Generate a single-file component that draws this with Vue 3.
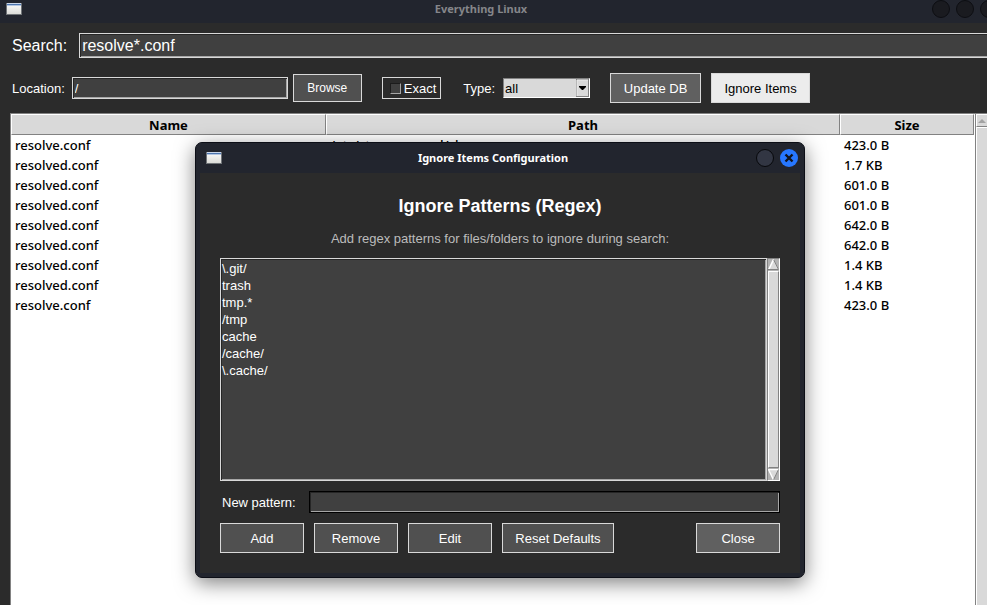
<script setup>
import { ref } from 'vue'

const search = ref('resolve*.conf')
const location = ref('/')
const exact = ref(false)
const type = ref('all')
const newPattern = ref('')
const selected = ref([])

const results = ref([
  { name: 'resolve.conf', path: '/etc/strongswan.d/charon', size: '423.0 B' },
  { name: 'resolved.conf', path: '', size: '1.7 KB' },
  { name: 'resolved.conf', path: '', size: '601.0 B' },
  { name: 'resolved.conf', path: '', size: '601.0 B' },
  { name: 'resolved.conf', path: '', size: '642.0 B' },
  { name: 'resolved.conf', path: '', size: '642.0 B' },
  { name: 'resolved.conf', path: '', size: '1.4 KB' },
  { name: 'resolved.conf', path: '', size: '1.4 KB' },
  { name: 'resolve.conf', path: '', size: '423.0 B' },
])

const patterns = ref(['\\.git/', 'trash', 'tmp.*', '/tmp', 'cache', '/cache/', '\\.cache/'])

function addPattern() {
  const value = newPattern.value.trim()
  if (value) patterns.value.push(value)
  newPattern.value = ''
}

function removePatterns() {
  patterns.value = patterns.value.filter((p) => !selected.value.includes(p))
}
</script>

<template>
  <div class="app">
    <header class="titlebar main-title">
      <svg class="win-icon" width="16" height="12" viewBox="0 0 16 12" aria-hidden="true">
        <defs>
          <linearGradient id="paper" x1="0" y1="0" x2="0" y2="1">
            <stop offset="0" stop-color="#ffffff" />
            <stop offset="1" stop-color="#dcdcd8" />
          </linearGradient>
        </defs>
        <rect x="0" y="0" width="16" height="12" fill="#6f7377" />
        <rect x="1" y="0" width="14" height="11" fill="url(#paper)" />
        <rect x="1" y="0" width="14" height="1" fill="#c9d6ea" />
        <rect x="1" y="1" width="14" height="1" fill="#4d76b0" />
        <rect x="1" y="2" width="14" height="1" fill="#b4c6e2" />
      </svg>
      <h1 class="caption dim">Everything Linux</h1>
      <div class="win-buttons">
        <button class="round off" type="button" aria-label="Minimize"></button>
        <button class="round off" type="button" aria-label="Maximize"></button>
        <button class="round off" type="button" aria-label="Close window"></button>
      </div>
    </header>

    <div class="search-row">
      <label class="big" for="search">Search:</label>
      <input id="search" v-model="search" class="entry search" type="text" />
    </div>

    <div class="controls">
      <label class="lbl" for="location">Location:</label>
      <input id="location" v-model="location" class="entry location" type="text" />
      <button class="btn browse" type="button">Browse</button>
      <label class="exact"><input v-model="exact" type="checkbox" /><span class="lbl">Exact</span></label>
      <label class="lbl" for="type">Type:</label>
      <div class="combo">
        <select id="type" v-model="type">
          <option>all</option>
          <option>file</option>
          <option>folder</option>
        </select>
        <svg class="combo-arrow" width="13" height="18" viewBox="0 0 13 18" aria-hidden="true">
          <rect width="13" height="18" fill="#808080" />
          <rect x="1" y="1" width="11" height="16" fill="#d9d9d9" />
          <path d="M1 17V1H12" fill="none" stroke="#eeeeee" />
          <path d="M3 7H10V8L7 11H6L3 8Z" fill="#000" />
        </svg>
      </div>
      <button class="btn strong update" type="button">Update DB</button>
      <button class="btn active" type="button">Ignore Items</button>
    </div>

    <main class="results">
      <div class="table-box">
        <table>
          <colgroup>
            <col class="col-name" />
            <col />
            <col class="col-size" />
          </colgroup>
          <thead>
            <tr><th>Name</th><th>Path</th><th>Size</th></tr>
          </thead>
          <tbody>
            <tr v-for="(row, i) in results" :key="i">
              <td>{{ row.name }}</td>
              <td>{{ row.path }}</td>
              <td>{{ row.size }}</td>
            </tr>
          </tbody>
        </table>
      </div>
      <div class="side-scroll">
        <div class="side-up">
          <svg width="8" height="4" viewBox="0 0 8 4" aria-hidden="true"><path d="M4 0L8 4H0Z" fill="#a3a3a3" /></svg>
        </div>
        <div class="side-thumb"></div>
      </div>
    </main>

    <section class="dialog" role="dialog" aria-labelledby="dialog-title">
      <header class="titlebar dialog-bar">
        <svg class="win-icon" width="16" height="12" viewBox="0 0 16 12" aria-hidden="true">
          <rect x="0" y="0" width="16" height="12" fill="#6f7377" />
          <rect x="1" y="0" width="14" height="11" fill="url(#paper)" />
          <rect x="1" y="0" width="14" height="1" fill="#c9d6ea" />
          <rect x="1" y="1" width="14" height="1" fill="#4d76b0" />
          <rect x="1" y="2" width="14" height="1" fill="#b4c6e2" />
        </svg>
        <h2 id="dialog-title" class="caption">Ignore Items Configuration</h2>
        <div class="win-buttons">
          <button class="round" type="button" aria-label="Minimize dialog"></button>
          <button class="round close" type="button" aria-label="Close dialog">
            <svg width="18" height="18" viewBox="0 0 18 18" aria-hidden="true">
              <path d="M5.5 5.5L12.5 12.5M12.5 5.5L5.5 12.5" stroke="#10131c" stroke-width="2.4" />
            </svg>
          </button>
        </div>
      </header>

      <div class="dialog-body">
        <h3>Ignore Patterns (Regex)</h3>
        <p>Add regex patterns for files/folders to ignore during search:</p>

        <div class="list-row">
          <select v-model="selected" class="patterns" multiple aria-label="Ignore patterns">
            <option v-for="p in patterns" :key="p" :value="p">{{ p }}</option>
          </select>
          <div class="tk-scroll">
            <svg width="11" height="11" viewBox="0 0 11 11" aria-hidden="true">
              <path d="M5.5 0L11 11H0Z" fill="#d9d9d9" />
              <path d="M5.5 0.5L0.8 10.5" stroke="#fff" stroke-width="1.6" />
              <path d="M0 10.5H10.5L5.8 1" fill="none" stroke="#828282" />
            </svg>
            <div class="tk-thumb"></div>
            <svg width="11" height="11" viewBox="0 0 11 11" aria-hidden="true">
              <path d="M0 0H11L5.5 11Z" fill="#d9d9d9" />
              <path d="M10.5 0.5H0.5L5.3 10.5" fill="none" stroke="#fff" stroke-width="1.4" />
              <path d="M10.5 0.5L5.7 10.5" stroke="#828282" />
            </svg>
          </div>
        </div>

        <div class="new-row">
          <label class="lbl" for="pattern">New pattern:</label>
          <input id="pattern" v-model="newPattern" class="entry pattern" type="text" />
        </div>

        <div class="actions">
          <button class="btn" type="button" @click="addPattern">Add</button>
          <button class="btn" type="button" @click="removePatterns">Remove</button>
          <button class="btn" type="button">Edit</button>
          <button class="btn wide" type="button">Reset Defaults</button>
          <button class="btn strong last" type="button">Close</button>
        </div>
      </div>
    </section>
  </div>
</template>

<style>
html,
body {
  margin: 0;
  background: #2b2b2b;
}
</style>

<style scoped>
.app {
  position: relative;
  display: flex;
  flex-direction: column;
  height: 100vh;
  overflow: hidden;
  background: #2b2b2b;
  color: #fff;
  font: 13px/16px "Liberation Sans", Arial, sans-serif;
}
.app *,
.app *::before {
  box-sizing: border-box;
}
button,
input,
select {
  margin: 0;
  border-radius: 0;
  font: inherit;
  color: inherit;
  outline: none;
}

.titlebar {
  display: grid;
  align-items: center;
  background: #22252e;
}
.main-title {
  flex: none;
  height: 23px;
  padding: 0 0 8px 6px;
  grid-template-columns: 60px 1fr 55px;
}
.caption {
  margin: 0;
  text-align: center;
  font: 700 11px/16px "Noto Sans", sans-serif;
}
.dim {
  color: #85868a;
}
.main-title .caption {
  padding-right: 36px;
}
.win-buttons {
  display: flex;
  gap: 6px;
}
.round {
  flex: none;
  width: 18px;
  height: 18px;
  padding: 0;
  border: 1px solid #07080b;
  border-radius: 50%;
  background: #323643;
}
.round.off {
  background: #1a1b20;
  border-color: #0d0e12;
}
.round.close {
  border: 0;
  background: #2777ff;
}
.round svg {
  display: block;
}

.search-row {
  display: flex;
  align-items: center;
  gap: 12px;
  padding: 10px 0 0 12px;
}
.big {
  font-size: 16px;
}
.lbl {
  padding-top: 2px;
}
.entry {
  height: 22px;
  padding: 0 2px;
  border: 1px solid #d9d9d9;
  background: #404040;
  box-shadow: inset 1px 1px #262626, inset -1px -1px #a6a6a6;
}
.entry.search {
  flex: 1;
  min-width: 0;
  height: 25px;
  border-right: 0;
  box-shadow: inset 1px 1px #262626, inset 0 -1px #a6a6a6;
  font-size: 16px;
}

.controls {
  display: flex;
  align-items: center;
  padding: 15px 12px 10px;
}
.entry.location {
  width: 216px;
  margin: 0 5px 0 7px;
}
.btn {
  width: 84px;
  height: 30px;
  padding: 2px 0 0;
  border: 1px solid #d9d9d9;
  background: #505050;
  text-align: center;
}
.btn.browse {
  width: 69px;
  height: 28px;
  padding: 0;
  font-size: 12px;
}
.btn.strong {
  background: #606060;
}
.btn.update {
  width: 91px;
  margin: 0 10px 0 20px;
}
.btn.active {
  width: 99px;
  background: #ececec;
  color: #000;
}
.exact {
  display: flex;
  align-items: center;
  gap: 3px;
  height: 22px;
  margin: 0 22px 0 20px;
  padding: 0 4px 0 7px;
  border: 1px solid #d9d9d9;
}
.exact input {
  width: 11px;
  height: 11px;
  appearance: none;
  border: 1px solid;
  border-color: #1c1c1c #a6a6a6 #a6a6a6 #1c1c1c;
  background: #404040;
}
.exact input:checked {
  background: #d9d9d9;
}
.combo {
  display: grid;
  align-items: center;
  width: 87px;
  height: 20px;
  margin-left: 8px;
  border: 1px solid;
  border-color: #828282 #fff #fff #828282;
  background: #d9d9d9;
  color: #000;
}
.combo select {
  grid-area: 1 / 1;
  width: 100%;
  height: 18px;
  padding: 1px 14px 0 1px;
  appearance: none;
  border: 0;
  background: transparent;
}
.combo-arrow {
  grid-area: 1 / 1;
  justify-self: end;
  pointer-events: none;
}

.results {
  flex: 1;
  display: flex;
  min-height: 0;
  margin-left: 10px;
}
.table-box {
  flex: 1;
  min-width: 0;
  padding-right: 1px;
  border: solid #828282;
  border-width: 1px 0 0 1px;
  background: #fff;
  color: #000;
  font: 500 13px/20px "Noto Sans", sans-serif;
}
table {
  width: 100%;
  table-layout: fixed;
  border-spacing: 0;
}
.col-name {
  width: 315px;
}
.col-size {
  width: 134px;
}
th {
  height: 21px;
  padding: 1px 0 0;
  border: 1px solid;
  border-color: #fff #828282 #828282 #fff;
  background: #d9d9d9;
  font-weight: 700;
  line-height: 18px;
}
td {
  height: 20px;
  padding: 0 4px;
  white-space: nowrap;
}
.side-scroll {
  display: flex;
  flex-direction: column;
  width: 12px;
  border: solid #828282;
  border-width: 1px 0 0 1px;
  background: #d9d9d9;
}
.side-up {
  display: flex;
  align-items: center;
  justify-content: center;
  height: 13px;
  border: solid #fff;
  border-width: 1px 0 0 1px;
  border-bottom: 1px solid #828282;
}
.side-thumb {
  flex: 1;
  border: solid #fff;
  border-width: 1px 0 0 1px;
}

.dialog {
  position: absolute;
  top: 142px;
  left: 195px;
  width: 610px;
  padding: 0 4px 4px;
  border: 1px solid #0c0e16;
  border-radius: 7px;
  background: #22252e;
  box-shadow: 0 5px 20px rgba(0, 0, 0, 0.5);
}
.dialog-bar {
  height: 30px;
  padding: 0 1px 0 6px;
  grid-template-columns: 44px 1fr 43px;
}
.dialog-bar .caption {
  padding-right: 20px;
}
.dialog-body {
  padding: 22px 20px 20px;
  background: #2b2b2b;
}
h3 {
  margin: 0 0 14px;
  text-align: center;
  font-size: 18px;
  line-height: 22px;
}
p {
  margin: 0 0 11px;
  text-align: center;
  color: #bcbcbc;
}
.list-row {
  display: flex;
  height: 223px;
  margin-bottom: 10px;
}
.patterns {
  flex: 1;
  padding: 2px 0 0;
  overflow: hidden;
  border: 1px solid #d9d9d9;
  background: #404040;
  box-shadow: inset 1px 1px #262626, inset -1px -1px #a6a6a6;
}
.patterns option {
  min-height: 17px;
  padding: 0 1px;
  line-height: 17px;
}
.tk-scroll {
  display: flex;
  flex-direction: column;
  width: 13px;
  border: 1px solid;
  border-color: #828282 #fff #fff #828282;
  background: #b3b3b3;
}
.tk-scroll svg {
  flex: none;
}
.tk-thumb {
  flex: 1;
  margin: 1px 0;
  border: 1px solid;
  border-color: #fff #828282 #828282 #fff;
  background: #d9d9d9;
}
.new-row {
  display: flex;
  align-items: center;
  gap: 13px;
  margin-bottom: 10px;
  padding-left: 2px;
}
.entry.pattern {
  flex: 1;
  border-color: #000;
}
.actions {
  display: flex;
  gap: 10px;
}
.btn.wide {
  width: 112px;
}
.btn.last {
  margin-left: auto;
}
</style>
